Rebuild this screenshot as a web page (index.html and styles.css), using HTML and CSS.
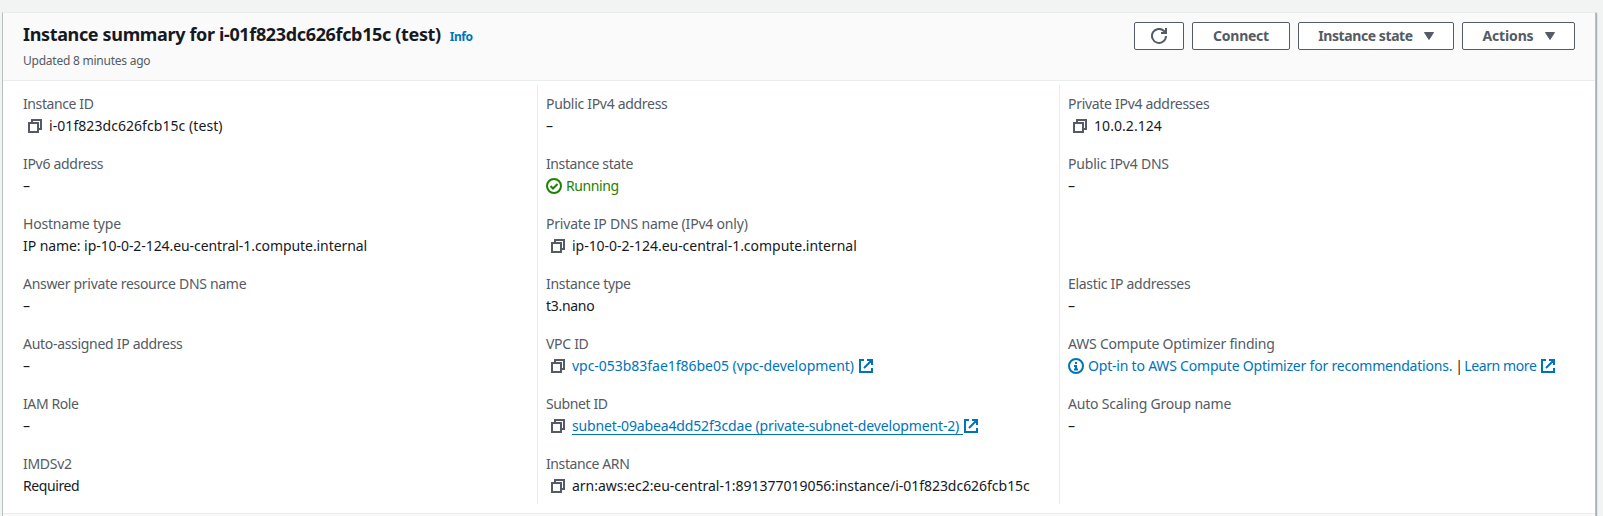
FILE: index.html
```html
<!DOCTYPE html>
<html lang="en">
<head>
<meta charset="utf-8">
<title>Instance summary</title>
<link rel="stylesheet" href="styles.css">
</head>
<body>
<svg class="defs" aria-hidden="true">
  <symbol id="copy" viewBox="0 0 16 16"><path d="M2 5h9v9H2zM5 5V2h9v9h-3" fill="none" stroke="currentColor" stroke-width="2"/></symbol>
  <symbol id="external" viewBox="0 0 16 16"><path d="M6 2H2v12h12v-4M9 2h5v5M13.500 2.500 6 10" fill="none" stroke="currentColor" stroke-width="2"/></symbol>
  <symbol id="check" viewBox="0 0 16 16"><circle cx="8" cy="8" r="7" fill="none" stroke="currentColor" stroke-width="2"/><path d="m4.500 8 2.500 2.500L11.500 6" fill="none" stroke="currentColor" stroke-width="2"/></symbol>
  <symbol id="info" viewBox="0 0 16 16"><circle cx="8" cy="8" r="7" fill="none" stroke="currentColor" stroke-width="2"/><path d="M8 4v2M6 8h2v3M6 11.500h4" fill="none" stroke="currentColor" stroke-width="2"/></symbol>
  <symbol id="refresh" viewBox="0 0 16 16"><path d="M15 8a7 7 0 1 1-2-5l2 2M10 5h5V0" fill="none" stroke="currentColor" stroke-width="2"/></symbol>
  <symbol id="caret" viewBox="0 0 10 8"><path d="M.5.5h9L5 7.500z" fill="currentColor" stroke="currentColor" stroke-linejoin="round"/></symbol>
</svg>
<main class="panel">
  <header class="header">
    <div class="heading">
      <div class="title-row"><h1 class="title">Instance summary for i-01f823dc626fcb15c (test)</h1><a class="info-link">Info</a></div>
      <p class="updated">Updated 8 minutes ago</p>
    </div>
    <div class="actions">
      <button class="btn btn-refresh" aria-label="Refresh"><svg class="icon"><use href="#refresh"/></svg></button>
      <button class="btn btn-connect"><span>Connect</span></button>
      <button class="btn btn-state"><span>Instance state</span><svg class="caret"><use href="#caret"/></svg></button>
      <button class="btn btn-actions"><span>Actions</span><svg class="caret"><use href="#caret"/></svg></button>
    </div>
  </header>
  <section class="columns">
    <dl class="column">
      <div class="field"><dt class="tight">Instance ID</dt><dd><svg class="icon copy"><use href="#copy"/></svg><span class="wide">i-01f823dc626fcb15c (test)</span></dd></div>
      <div class="field"><dt>IPv6 address</dt><dd>–</dd></div>
      <div class="field"><dt class="loose">Hostname type</dt><dd><span class="host">IP name: ip-10-0-2-124.eu-central-1.compute.internal</span></dd></div>
      <div class="field"><dt>Answer private resource DNS name</dt><dd>–</dd></div>
      <div class="field"><dt>Auto-assigned IP address</dt><dd>–</dd></div>
      <div class="field"><dt class="tight">IAM Role</dt><dd>–</dd></div>
      <div class="field"><dt>IMDSv2</dt><dd><span class="tight">Required</span></dd></div>
    </dl>
    <dl class="column">
      <div class="field"><dt>Public IPv4 address</dt><dd>–</dd></div>
      <div class="field"><dt class="tight">Instance state</dt><dd class="running"><svg class="icon"><use href="#check"/></svg><span class="tight">Running</span></dd></div>
      <div class="field"><dt class="loose">Private IP DNS name (IPv4 only)</dt><dd><svg class="icon copy"><use href="#copy"/></svg><span class="id">ip-10-0-2-124.eu-central-1.compute.internal</span></dd></div>
      <div class="field"><dt>Instance type</dt><dd><span class="type">t3.nano</span></dd></div>
      <div class="field"><dt>VPC ID</dt><dd><svg class="icon copy"><use href="#copy"/></svg><a class="link id">vpc-053b83fae1f86be05 (vpc-development)</a><svg class="icon external"><use href="#external"/></svg></dd></div>
      <div class="field"><dt class="tight">Subnet ID</dt><dd><svg class="icon copy"><use href="#copy"/></svg><a class="link hovered">subnet-09abea4dd52f3cdae (private-subnet-development-2)</a><svg class="icon external"><use href="#external"/></svg></dd></div>
      <div class="field"><dt class="tight">Instance ARN</dt><dd><svg class="icon copy"><use href="#copy"/></svg><span class="id">arn:aws:ec2:eu-central-1:891377019056:instance/i-01f823dc626fcb15c</span></dd></div>
    </dl>
    <dl class="column">
      <div class="field"><dt>Private IPv4 addresses</dt><dd><svg class="icon copy"><use href="#copy"/></svg><span class="wide">10.0.2.124</span></dd></div>
      <div class="field"><dt class="loose">Public IPv4 DNS</dt><dd>–</dd></div>
      <div class="field"></div>
      <div class="field"><dt>Elastic IP addresses</dt><dd>–</dd></div>
      <div class="field"><dt class="loose">AWS Compute Optimizer finding</dt><dd><svg class="icon info"><use href="#info"/></svg><a class="link loose">Opt-in to AWS Compute Optimizer for recommendations.</a><span class="bar">|</span><a class="link tight">Learn more</a><svg class="icon external"><use href="#external"/></svg></dd></div>
      <div class="field"><dt class="loose">Auto Scaling Group name</dt><dd>–</dd></div>
    </dl>
  </section>
</main>
</body>
</html>
```
FILE: styles.css
```css
* { box-sizing: border-box; }
body { margin: 0; padding: 12px 7px 0 2px; height: 516px; overflow: hidden; background: #f2f3f3; color: #16191f; font: 14px/22px "Noto Sans", sans-serif; }
.defs { display: none; }
.panel { height: 520px; border: 1px solid #eaeded; border-left-color: #b9c0c0; border-right-color: #b9c0c0; background: #fafafa; box-shadow: 1px 1px 1px rgba(0,28,36,.3); }
.header { display: flex; justify-content: space-between; height: 68px; padding: 9px 20px 0; border-bottom: 1px solid #eaeded; }
.heading { margin-top: -1px; }
.title-row { display: flex; align-items: baseline; gap: 9px; height: 27px; }
.title { margin: 0; font-size: 18px; line-height: 27px; font-weight: 700; letter-spacing: -.35px; }
.info-link { font-size: 12px; font-weight: 700; letter-spacing: -.5px; color: #0073bb; }
.updated { margin: 2px 0 0; font-size: 12px; letter-spacing: -.24px; color: #545b64; }
.actions { display: flex; gap: 8px; }
.btn { display: flex; align-items: center; justify-content: center; height: 28px; padding: 0; border: 1px solid #545b64; border-radius: 2px; background: #fff; color: #545b64; font: 700 14px/20px "Noto Sans", sans-serif; gap: 11px; }
.btn-refresh { width: 50px; }
.btn-connect { width: 98px; letter-spacing: -.25px; }
.btn-state { width: 156px; letter-spacing: -.42px; }
.btn-actions { width: 113px; letter-spacing: -.15px; }
.caret { width: 10px; height: 8px; }
.icon { flex: none; width: 16px; height: 16px; }
.columns { display: grid; grid-template-columns: 534px 522px 1fr; height: 433px; padding: 4px 0 9px; border-bottom: 1px solid #eaeded; background: #fff; }
.column { margin: 0; padding: 8px 0 0 8px; border-left: 1px solid #eaeded; }
.column:first-child { padding-left: 20px; border-left: 0; }
.field { height: 60px; white-space: nowrap; }
.field:nth-child(7) { height: 44px; }
dt { height: 22px; color: #545b64; letter-spacing: -.3px; }
dd { display: flex; align-items: center; height: 22px; margin: 0; }
.tight { letter-spacing: -.4px; }
.loose { letter-spacing: -.2px; }
.wide { letter-spacing: .06px; }
.id { letter-spacing: -.03px; }
.host { letter-spacing: -.07px; }
.type { letter-spacing: -.3px; }
.copy { margin: 0 6px 0 4px; color: #545b64; }
.external { margin-left: 4px; color: #0073bb; }
.link { color: #0073bb; }
.hovered { height: 18px; padding-right: 4px; border-bottom: 1px solid #0073bb; line-height: 18px; letter-spacing: -.145px; }
.hovered + .external { margin-left: 0; }
.running { gap: 4px; color: #1d8102; }
.info { margin-right: 4px; color: #0073bb; }
.bar { width: 5px; margin: 0 4px 0 3px; text-align: center; }
```
